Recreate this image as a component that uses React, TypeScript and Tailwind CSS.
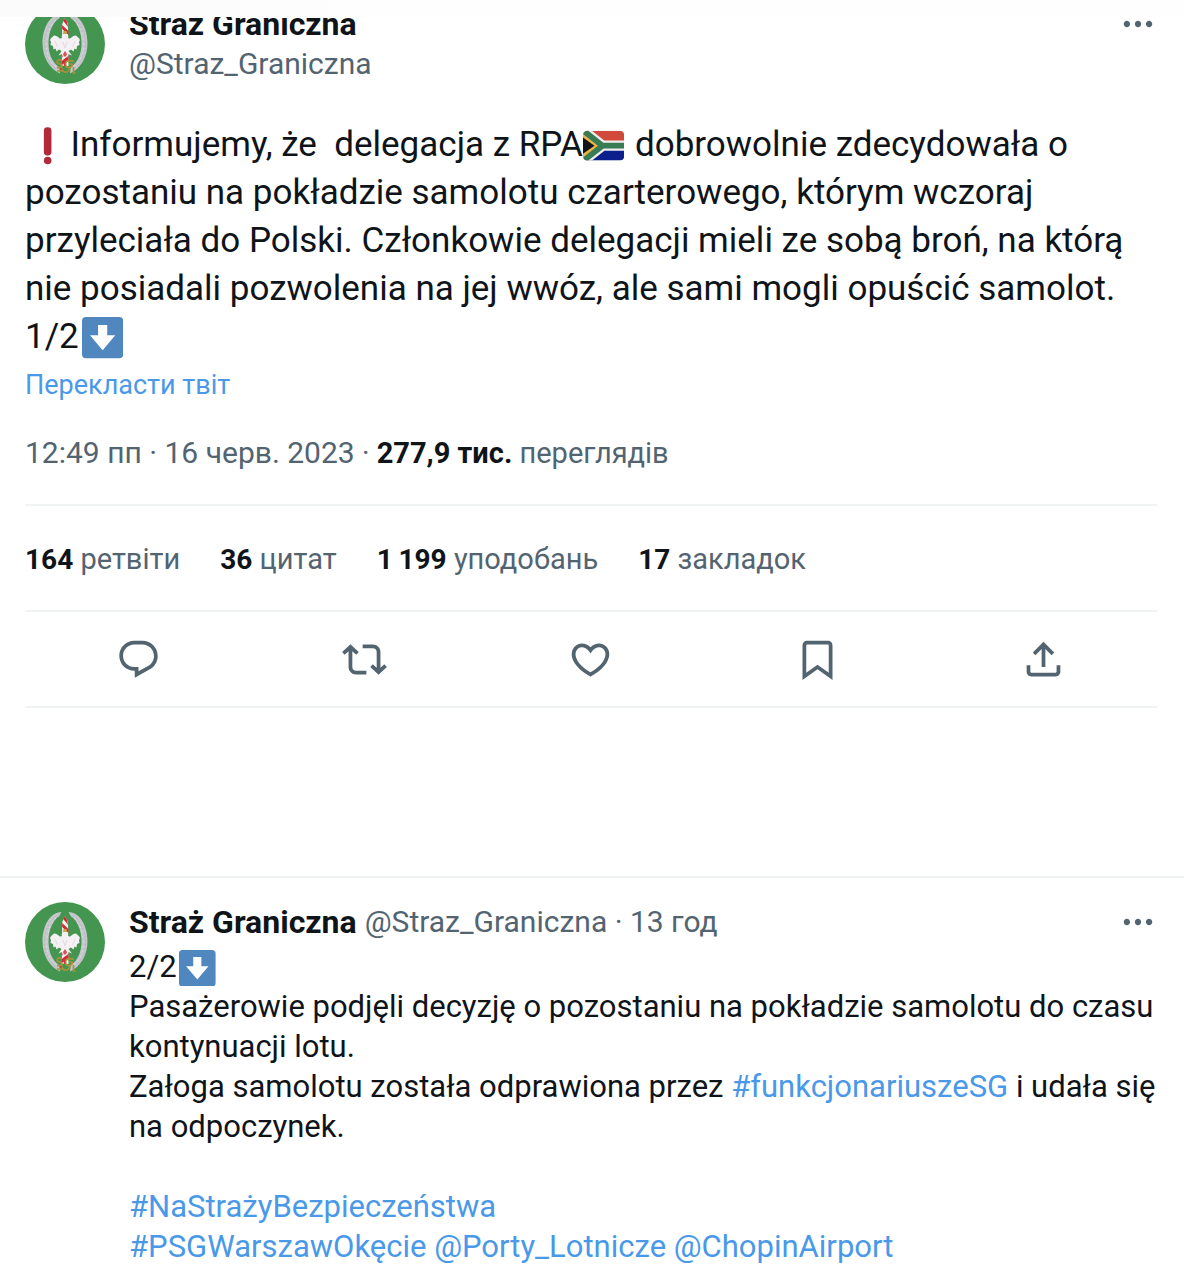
import React from 'react'

function Avatar() {
  return (
    <svg viewBox="0 0 80 80" className="size-20 shrink-0" role="img" aria-label="Straż Graniczna">
      <circle cx="40" cy="40" r="40" fill="#43954f" />
      <path d="M36.500 10C25 10 17.500 24 17.500 39C17.500 54 25 65 35 69.500L34 63C27 58 23.500 50 23.500 39C23.500 28 28 18 34 14.500Z" fill="#c6c7cc" />
      <path d="M43.500 10C55 10 62.500 24 62.500 39C62.500 54 55 65 45 69.500L46 63C53 58 56.500 50 56.500 39C56.500 28 52 18 46 14.500Z" fill="#c6c7cc" />
      <g fill="none" stroke="#b4b8bc" strokeWidth="1" strokeDasharray="2 2">
        <path d="M32 13.500C23 20 19 31 19.500 42C20 54 26 62 33 66" />
        <path d="M48 13.500C57 20 61 31 60.500 42C60 54 54 62 47 66" />
      </g>
      <g fill="none" stroke="#dcdde2" strokeWidth="1" strokeDasharray="2 3">
        <path d="M31 16C24 23 21 34 21.500 43C22 53 27 60 33 64" />
        <path d="M49 16C56 23 59 34 58.500 43C58 53 53 60 47 64" />
      </g>
      <path d="M40 14L43 20L43.500 62H36.800L37.200 20Z" fill="#f6eef0" />
      <path d="M38.300 17L40 14L42 18L43.200 23ZM37.200 21L43.400 27V31L37.200 25ZM36.800 49L43.500 44V48.500L36.800 53.500ZM36.800 57L43.500 51.500V56L36.800 61Z" fill="#cf2a35" />
      <path d="M40 31C41.500 29 44 31 43 34C46 36 47 31 51 31.500C52.500 33 54 33.500 55 36L54 38L54.500 41L52 42L51.500 45.500L49.500 44.500L48.500 47.500L46 45.500L43.500 47L47 51.500L43 50L42 54L40 50L38 54L37 50L33.500 51.500L36.500 47L34 45.500L31.500 47.500L30.500 44.500L28.500 45.500L28 42L25.500 41L26 38L25 36C26 33.500 27.500 33 29 31.500C33 31 34 36 37 34C36 32 37.500 29.500 40 31Z" fill="#f5f0f3" />
      <path d="M40 47L42 50L41 52.500H39L38 50Z" fill="#d8505a" />
      <path d="M30 37L32.500 43M50 37L47.500 43M38 38L40 44L42 38" fill="none" stroke="#ddd0d8" strokeWidth="0.700" />
      <path d="M38.500 27H41.500L42 30H38Z" fill="#c8a44c" />
      <path d="M37 56.500C32 54.500 30 59 34.500 60C38.500 61 37.500 64.500 32 63.500M49 57.500C43 55 39 58 41 62C43 65 48 63 47 60H44M36 63C38 70 44 70 45 63M48.500 63V69H50.500M32 67H39" fill="none" stroke="#ad9138" strokeWidth="1.700" />
      <path d="M39.500 57V62M35 65H37" stroke="#c63f3f" strokeWidth="1.500" />
    </svg>
  )
}

function DownArrowEmoji() {
  return (
    <svg viewBox="0 0 36 36" className="mx-[0.08em] inline-block size-[1.18em] align-[-0.3em]" role="img" aria-label="⬇️">
      <rect width="36" height="36" rx="3.500" fill="#5087bf" />
      <path d="M14 7H22V16H29L18 29L7 16H14Z" fill="#fff" />
    </svg>
  )
}

function ExclamationEmoji() {
  return (
    <svg viewBox="0 0 36 36" className="mx-[0.06em] inline-block size-[1.18em] align-[-0.3em]" role="img" aria-label="❗">
      <rect x="14.700" y="2" width="6.600" height="24.500" rx="3" fill="#b02a3b" />
      <circle cx="18" cy="31" r="3.300" fill="#b02a3b" />
    </svg>
  )
}

function SouthAfricaFlag() {
  return (
    <svg viewBox="0 0 36 36" className="mr-[0.06em] inline-block size-[1.18em] align-[-0.3em]" role="img" aria-label="🇿🇦">
      <defs>
        <clipPath id="flag-shape">
          <rect y="5" width="36" height="26" rx="4" />
        </clipPath>
      </defs>
      <g clipPath="url(#flag-shape)">
        <rect y="5" width="36" height="13" fill="#d0493a" />
        <rect y="18" width="36" height="13" fill="#0c1f8c" />
        <path d="M-2 3L17 18L-2 33M17 18H37" fill="none" stroke="#eee" strokeWidth="9" />
        <path d="M0 5V31L16 18Z" fill="#ecb447" />
        <path d="M-2 3L17 18L-2 33M17 18H37" fill="none" stroke="#397b52" strokeWidth="5" />
        <path d="M0 11V25L10 18Z" fill="#141414" />
      </g>
    </svg>
  )
}

const ICONS = {
  reply:
    'M1.751 10c0-4.42 3.584-8 8.005-8h4.366c4.49 0 8.129 3.64 8.129 8.13 0 2.96-1.607 5.68-4.196 7.11l-8.054 4.46v-3.69h-.067c-4.49.1-8.183-3.51-8.183-8.01zm8.005-6c-3.317 0-6.005 2.69-6.005 6 0 3.37 2.77 6.08 6.138 6.01l.351-.01h1.761v2.3l5.087-2.81c1.951-1.08 3.163-3.13 3.163-5.36 0-3.39-2.744-6.13-6.129-6.13H9.756z',
  retweet:
    'M4.5 3.88l4.432 4.14-1.364 1.46L5.5 7.55V16c0 1.1.896 2 2 2H13v2H7.5c-2.209 0-4-1.79-4-4V7.55L1.432 9.48.068 8.02 4.5 3.88zM16.5 6H11V4h5.5c2.209 0 4 1.79 4 4v8.45l2.068-1.93 1.364 1.46-4.432 4.14-4.432-4.14 1.364-1.46 2.068 1.93V8c0-1.1-.896-2-2-2z',
  like: 'M16.697 5.5c-1.222-.06-2.679.51-3.89 2.16l-.805 1.09-.806-1.09C9.984 6.01 8.526 5.44 7.304 5.5c-1.243.07-2.349.78-2.91 1.91-.552 1.12-.633 2.78.479 4.82 1.074 1.97 3.257 4.27 7.129 6.61 3.87-2.34 6.052-4.64 7.126-6.61 1.111-2.04 1.03-3.7.477-4.82-.561-1.13-1.666-1.84-2.908-1.91zm4.187 7.69c-1.351 2.48-4.001 5.12-8.379 7.67l-.503.3-.504-.3c-4.379-2.55-7.029-5.19-8.382-7.67-1.36-2.5-1.41-4.86-.514-6.67.887-1.79 2.647-2.91 4.601-3.01 1.651-.09 3.368.56 4.798 2.01 1.429-1.45 3.146-2.1 4.796-2.01 1.954.1 3.714 1.22 4.601 3.01.896 1.81.846 4.17-.514 6.67z',
  bookmark:
    'M4 4.5C4 3.12 5.119 2 6.5 2h11C18.881 2 20 3.12 20 4.5v18.44l-8-5.71-8 5.71V4.5zM6.5 4c-.276 0-.5.22-.5.5v14.56l6-4.29 6 4.29V4.5c0-.28-.224-.5-.5-.5h-11z',
  share:
    'M12 2.59l5.7 5.7-1.41 1.42L13 6.41V16h-2V6.41l-3.3 3.3-1.41-1.42L12 2.59zM21 15l-.02 3.51c0 1.38-1.12 2.49-2.5 2.49H5.5C4.11 21 3 19.88 3 18.5V15h2v3.5c0 .28.22.5.5.5h12.98c.28 0 .5-.22.5-.5L19 15h2z',
  more: 'M3 12c0-1.1.9-2 2-2s2 .9 2 2-.9 2-2 2-2-.9-2-2zm9 2c1.1 0 2-.9 2-2s-.9-2-2-2-2 .9-2 2 .9 2 2 2zm7 0c1.1 0 2-.9 2-2s-.9-2-2-2-2 .9-2 2 .9 2 2 2z',
}

function Icon({ name, className }: { name: keyof typeof ICONS; className: string }) {
  return (
    <svg viewBox="0 0 24 24" className={className} fill="currentColor" aria-hidden="true">
      <path d={ICONS[name]} />
    </svg>
  )
}

function MoreButton() {
  return (
    <button type="button" aria-label="Більше" className="ml-auto flex h-10 shrink-0 items-center text-[#536471]">
      <Icon name="more" className="size-[38px]" />
    </button>
  )
}

function Link({ children }: { children: React.ReactNode }) {
  return (
    <a href="#" className="text-[#4a99e9]">
      {children}
    </a>
  )
}

const STATS = [
  { value: '164', label: 'ретвіти' },
  { value: '36', label: 'цитат' },
  { value: '1\u2009199', label: 'уподобань' },
  { value: '17', label: 'закладок' },
]

const ACTIONS: { name: keyof typeof ICONS; label: string }[] = [
  { name: 'reply', label: 'Відповісти' },
  { name: 'retweet', label: 'Ретвітнути' },
  { name: 'like', label: 'Вподобати' },
  { name: 'bookmark', label: 'Закладка' },
  { name: 'share', label: 'Поділитися' },
]

export default function App() {
  return (
    <div className="relative min-h-screen overflow-hidden bg-white font-[Roboto,'Noto_Sans',sans-serif] text-[#0f1419]">
      <div className="absolute inset-x-0 top-0 h-[17px] bg-linear-to-r from-[#fafbfa] via-[#fafbfa] via-15% to-[#fefefe] to-30%" />

      <article className="pt-1 pr-[27px] pl-[25px]">
        <header className="flex gap-6">
          <Avatar />
          <div className="leading-10">
            <div className="text-[32px] font-bold">Straż Graniczna</div>
            <div className="text-[30px] text-[#536471]">@Straz_Graniczna</div>
          </div>
          <MoreButton />
        </header>

        <p className="mt-[37px] text-[35px] leading-12 whitespace-pre-wrap">
          <ExclamationEmoji />
          {'Informujemy, że  delegacja z RPA'}
          <SouthAfricaFlag />
          {' dobrowolnie zdecydowała o pozostaniu na pokładzie samolotu czarterowego, którym wczoraj przyleciała do Polski. Członkowie delegacji mieli ze sobą broń, na którą nie posiadali pozwolenia na jej wwóz, ale sami mogli opuścić samolot.\n1/2'}
          <DownArrowEmoji />
        </p>
        <button type="button" className="block text-[27px] leading-12 text-[#4a99e9]">
          Перекласти твіт
        </button>

        <div className="mt-6 text-[29px] leading-10 text-[#536471]">
          <a href="#" className="text-[30px]">12:49 пп · 16 черв. 2023</a>
          {' · '}
          <strong className="font-bold text-[#0f1419]">277,9 тис.</strong> переглядів
        </div>

        <div className="mt-[31px] flex flex-wrap gap-x-10 border-y-2 border-[#eff3f4] pt-[33px] pb-[30px] text-[29px] leading-10 text-[#536471]">
          {STATS.map((s) => (
            <a href="#" key={s.label}>
              <strong className="text-[28px] font-bold text-[#0f1419]">{s.value}</strong> {s.label}
            </a>
          ))}
        </div>

        <div className="flex justify-around border-b-2 border-[#eff3f4] pt-[25px] pb-6 text-[#536471]">
          {ACTIONS.map((a) => (
            <button type="button" key={a.name} aria-label={a.label}>
              <Icon name={a.name} className="size-[45px]" />
            </button>
          ))}
        </div>
      </article>

      <article className="mt-[168px] flex gap-6 border-t-2 border-[#eff3f4] pt-6 pr-[27px] pl-[25px]">
        <Avatar />
        <div className="min-w-0 flex-1">
          <header className="flex gap-2 leading-10 whitespace-nowrap">
            <span className="text-[32px] font-bold">Straż Graniczna</span>
            <span className="text-[30px] text-[#536471]">@Straz_Graniczna · 13 год</span>
            <MoreButton />
          </header>
          <p className="mt-[5px] text-[31px] leading-10 whitespace-pre-wrap">
            2/2
            <DownArrowEmoji />
            {'\nPasażerowie podjęli decyzję o pozostaniu na pokładzie samolotu do czasu kontynuacji lotu.\nZałoga samolotu została odprawiona przez '}
            <Link>#funkcjonariuszeSG</Link>
            {' i udała się na odpoczynek.\n\n'}
            <Link>#NaStrażyBezpieczeństwa</Link>
            {'\n'}
            <Link>#PSGWarszawOkęcie</Link> <Link>@Porty_Lotnicze</Link> <Link>@ChopinAirport</Link>
          </p>
        </div>
      </article>
    </div>
  )
}
